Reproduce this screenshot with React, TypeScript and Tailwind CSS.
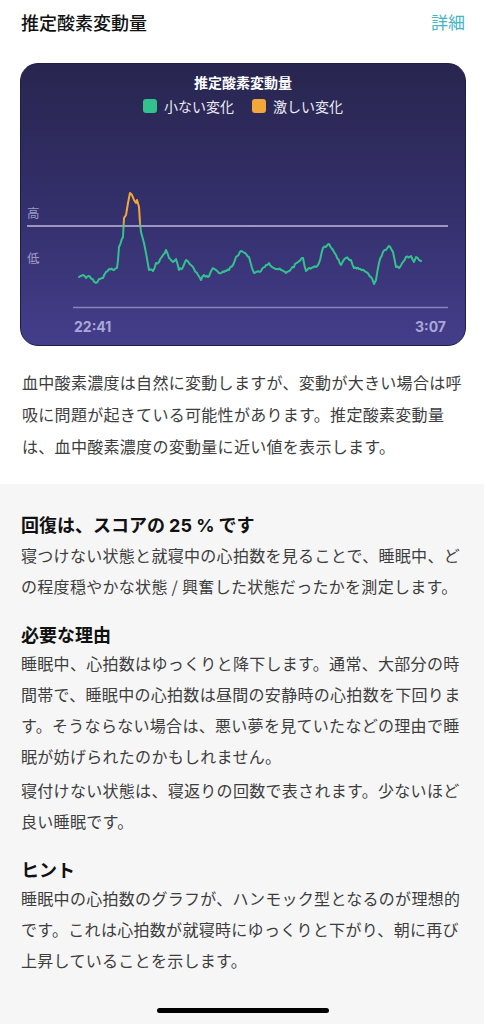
import React from "react";

const FONT = { fontFamily: '"Noto Sans CJK JP", "Noto Sans", sans-serif' };
const NUM = { fontFamily: 'Inter, "Noto Sans CJK JP", sans-serif' };

const RAW: [number, number][] = [
  [78, 277], [81.7, 275], [85, 278], [88, 276], [93, 281.7], [95, 283], [98, 279], [102, 278],
  [105, 272], [108, 269], [113, 270], [116, 268], [117, 260], [118, 247], [122, 237], [123, 218],
  [125, 215], [127, 203], [129, 193], [131, 195], [133, 200], [135, 203], [136, 200], [138, 207],
  [139, 223], [140, 232], [143, 243], [145, 253], [148, 270], [152, 271], [155, 263], [158, 262],
  [162, 255], [165, 250], [168, 258], [172, 262], [175, 259], [178, 270], [182, 267], [185, 260],
  [188, 263], [193, 269], [197, 275], [200, 280], [203, 275], [207, 277], [212, 268], [215, 270],
  [218, 273], [223, 272], [228, 270], [232, 265], [235, 257], [240, 251], [244, 253], [248, 257],
  [251, 268], [253, 273], [260, 271], [265, 265], [268, 263], [273, 268], [280, 270], [285, 273],
  [290, 269], [297, 262], [302, 258], [305, 271], [308, 268], [315, 267], [318, 263], [322, 248],
  [325, 247], [328, 244], [332, 250], [335, 255], [340, 265], [345, 258], [350, 260], [353, 268],
  [358, 269], [365, 272], [370, 277], [373, 284], [375, 280], [378, 263], [382, 252], [385, 250],
  [388, 246], [392, 252], [395, 267], [398, 268], [402, 262], [405, 257], [410, 256], [413, 262],
  [415, 257], [418, 260], [420, 261],
];

function buildPath(): string {
  let seed = 7;
  const rnd = () => {
    seed = (seed * 9301 + 49297) % 233280;
    return seed / 233280;
  };
  const pts: [number, number][] = [];
  for (let i = 0; i < RAW.length - 1; i++) {
    const [x0, y0] = RAW[i];
    const [x1, y1] = RAW[i + 1];
    const steps = Math.max(1, Math.round((x1 - x0) / 1.4));
    for (let s = 0; s < steps; s++) {
      const t = s / steps;
      const x = x0 + (x1 - x0) * t;
      let y = y0 + (y1 - y0) * t;
      if (s > 0) y += (rnd() - 0.5) * 2.4;
      pts.push([x - 20, y - 123]);
    }
  }
  const last = RAW[RAW.length - 1];
  pts.push([last[0] - 20, last[1] - 123]);
  return pts.map((p, i) => `${i === 0 ? "M" : "L"}${p[0].toFixed(1)} ${p[1].toFixed(1)}`).join(" ");
}

const PATH = buildPath();

function Chart() {
  return (
    <div className="relative h-[190px] w-full">
      <svg className="absolute inset-0" width="446" height="190" viewBox="0 0 446 190">
        <defs>
          <linearGradient id="lg" x1="0" y1="60" x2="0" y2="120" gradientUnits="userSpaceOnUse">
            <stop offset="0" stopColor="#f2a73a" />
            <stop offset="0.62" stopColor="#f2a73a" />
            <stop offset="0.78" stopColor="#33c18e" />
            <stop offset="1" stopColor="#33c18e" />
          </linearGradient>
        </defs>
        <line x1="6" y1="103" x2="427" y2="103" stroke="#bebbdc" strokeWidth="1.6" />
        <line x1="52" y1="184.5" x2="427" y2="184.5" stroke="#8784bf" strokeWidth="1.4" />
        <path d={PATH} fill="none" stroke="url(#lg)" strokeWidth="2" strokeLinejoin="round" strokeLinecap="round" />
      </svg>
      <span className="absolute left-[6px] top-[81px] text-[12.5px] leading-[18px] text-[#9e9cc6]" style={FONT}>高</span>
      <span className="absolute left-[6px] top-[126px] text-[12.5px] leading-[18px] text-[#9e9cc6]" style={FONT}>低</span>
    </div>
  );
}

function Card() {
  return (
    <div className="mx-[20px] mt-[19px] flex h-[283px] flex-col overflow-hidden rounded-[18px] border border-[#1f1d47] bg-linear-to-b from-[#28264f] via-[#332f6a] to-[#443e8b]">
      <div className="pt-[9px] text-center text-[14px] font-bold leading-[18px] text-white" style={FONT}>
        推定酸素変動量
      </div>
      <div className="mt-[5px] flex h-[20px] items-center justify-center gap-[18px]" style={FONT}>
        <div className="flex items-center gap-[7px]">
          <span className="h-[14px] w-[14px] rounded-[3px] bg-[#33c18e]" />
          <span className="text-[14px] leading-[20px] text-[#ecebf5]">小ない変化</span>
        </div>
        <div className="flex items-center gap-[7px]">
          <span className="h-[14px] w-[14px] rounded-[3px] bg-[#f2a73a]" />
          <span className="text-[14px] leading-[20px] text-[#ecebf5]">激しい変化</span>
        </div>
      </div>
      <div className="mt-[7px]">
        <Chart />
      </div>
      <div className="mt-[4px] flex items-center justify-between pl-[53px] pr-[19px] text-[14px] font-bold leading-[20px] text-[#aaa7d8]" style={NUM}>
        <span>22:41</span>
        <span>3:07</span>
      </div>
    </div>
  );
}

function Section({ title, paras, first }: { title: React.ReactNode; paras: string[]; first?: boolean }) {
  return (
    <div className={first ? "" : "mt-[18px]"}>
      <h2 className="text-[18px] font-bold leading-[28px] text-[#111111]" style={FONT}>{title}</h2>
      {paras.map((p, i) => (
        <p
          key={i}
          className={`text-[16px] leading-[31px] tracking-[0.3px] text-[#3d3d3d] ${i > 0 ? "mt-[3px]" : ""}`}
          style={FONT}
        >
          {p}
        </p>
      ))}
    </div>
  );
}

export default function App() {
  return (
    <div className="flex min-h-[1024px] w-[486px] flex-col bg-white" style={FONT}>
      <div className="flex h-[44px] items-center justify-between pl-[21px] pr-[21px]">
        <span className="text-[18px] font-medium leading-[24px] text-[#111111]">推定酸素変動量</span>
        <span className="text-[17px] leading-[24px] text-[#45b4c3]">詳細</span>
      </div>
      <Card />
      <p className="mt-[20px] w-[464px] pb-[22px] pl-[22px] text-[16px] leading-[32px] tracking-[0.3px] text-[#3d3d3d]">
        血中酸素濃度は自然に変動しますが、変動が大きい場合は呼吸に問題が起きている可能性があります。推定酸素変動量は、血中酸素濃度の変動量に近い値を表示します。
      </p>
      <div className="mr-[2px] flex flex-1 flex-col bg-[#f6f6f6] pl-[21px] pr-[20px] pt-[26px]">
        <Section
          first
          title={
            <>
              回復は、スコアの <span style={NUM}>25 %</span> です
            </>
          }
          paras={["寝つけない状態と就寝中の心拍数を見ることで、睡眠中、どの程度穏やかな状態 / 興奮した状態だったかを測定します。"]}
        />
        <Section
          title="必要な理由"
          paras={[
            "睡眠中、心拍数はゆっくりと降下します。通常、大部分の時間帯で、睡眠中の心拍数は昼間の安静時の心拍数を下回ります。そうならない場合は、悪い夢を見ていたなどの理由で睡眠が妨げられたのかもしれません。",
            "寝付けない状態は、寝返りの回数で表されます。少ないほど良い睡眠です。",
          ]}
        />
        <Section
          title="ヒント"
          paras={["睡眠中の心拍数のグラフが、ハンモック型となるのが理想的です。これは心拍数が就寝時にゆっくりと下がり、朝に再び上昇していることを示します。"]}
        />
        <div className="mb-[11px] mt-auto flex justify-center pt-[20px]">
          <div className="h-[5px] w-[172px] rounded-full bg-black" />
        </div>
      </div>
    </div>
  );
}
